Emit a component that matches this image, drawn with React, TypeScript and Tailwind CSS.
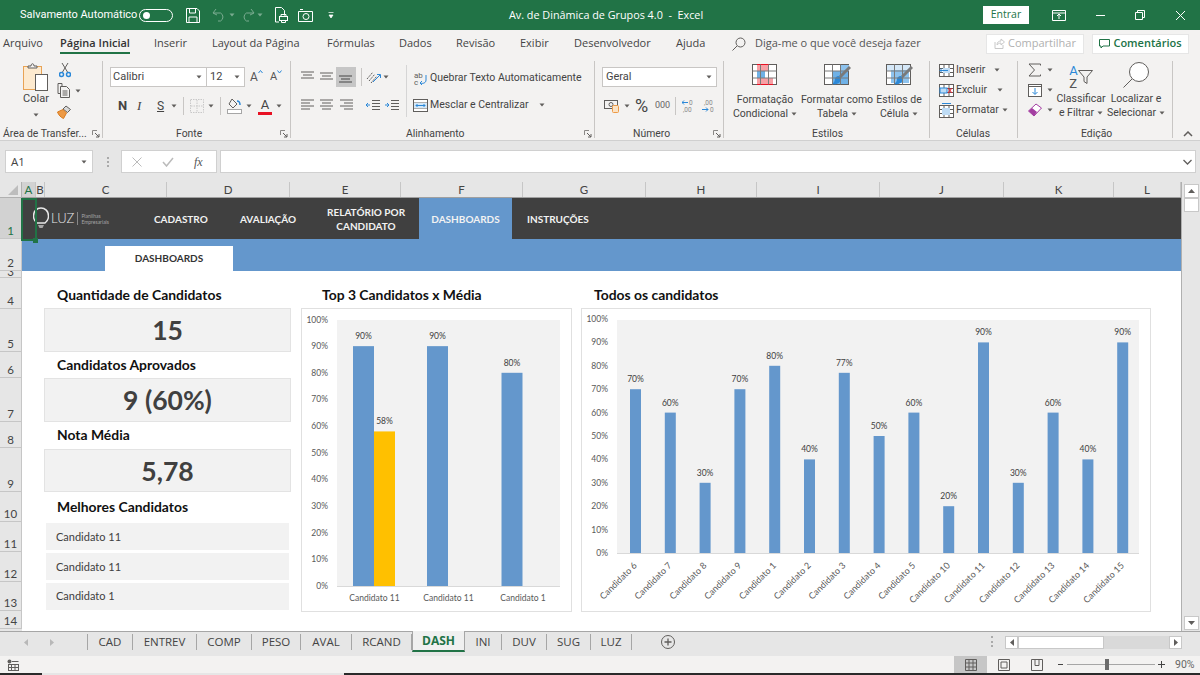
import React from "react";

const G = "#605e5c";
const B = "#2b88d8";

function Svg({ w, h, children, className = "" }: { w: number; h: number; children?: React.ReactNode; className?: string }) {
  return (
    <svg width={w} height={h} viewBox={`0 0 ${w} ${h}`} fill="none" className={"shrink-0 " + className}>
      {children}
    </svg>
  );
}

function Caret({ className = "" }: { className?: string }) {
  return (
    <Svg w={6} h={4} className={className}>
      <path d="M0.5 .5h5L3 3.5z" fill={G} />
    </Svg>
  );
}

function Lines({ rows, stroke = G }: { rows: [number, number, number][]; stroke?: string }) {
  return (
    <Svg w={14} h={14}>
      {rows.map(([a, b, y], i) => (
        <path key={i} d={`M${a} ${y}H${b}`} stroke={stroke} strokeWidth={1} />
      ))}
    </Svg>
  );
}

function Launcher({ className = "" }: { className?: string }) {
  return (
    <Svg w={8} h={8} className={className}>
      <path d="M.5 5V.5H5" stroke="#8a8886" />
      <path d="M3 3l4 4M7 4v3H4" stroke={G} />
    </Svg>
  );
}

function Group({ w, label, labelClass, launcher, children }: { w: string; label: string; labelClass: string; launcher?: boolean; children: React.ReactNode }) {
  return (
    <div className={"flex h-[77px] shrink-0 flex-col border-r border-[#c8c6c4] " + w}>
      <div className="flex h-[66px] min-w-0">{children}</div>
      <div className="flex h-[11px] items-center pt-[2px]">
        <span className={"text-[10.4px] leading-[14px] whitespace-nowrap text-[#444] " + labelClass}>{label}</span>
        {launcher && <Launcher className="mr-[2px] ml-auto" />}
      </div>
    </div>
  );
}

function TitleBar() {
  return (
    <div className="flex h-[30px] shrink-0 items-center bg-[#217346] text-white">
      <span className="ml-[20px] w-[119px] font-['Roboto',sans-serif] text-[11px] whitespace-nowrap">Salvamento Automático</span>
      <div className="flex h-[13px] w-[34px] items-center rounded-full border border-white pl-[3px]">
        <div className="h-[7px] w-[7px] rounded-full bg-white" />
      </div>
      <Svg w={14} h={15} className="ml-[13px]">
        <path d="M.5.5h10.5l2.500 2.500v11.500H.5z M3.500.5v4.500h6V.5 M3 14.500V9h8v5.500" stroke="#fff" />
      </Svg>
      <Svg w={15} h={14} className="ml-[12px] opacity-40">
        <path d="M4 1L1 5l4 2M1.500 5h7a4.500 4.500 0 0 1 0 8H6" stroke="#fff" />
      </Svg>
      <Caret className="ml-[2px] opacity-40 brightness-[3]" />
      <Svg w={15} h={14} className="ml-[5px] opacity-40">
        <path d="M11 1l3 4-4 2M13.500 5h-7a4.500 4.500 0 0 0 0 8H9" stroke="#fff" />
      </Svg>
      <Caret className="ml-[2px] opacity-40 brightness-[3]" />
      <Svg w={14} h={16} className="ml-[11px]">
        <path d="M1.500.500h6l3 3v5M1.500.500V15H5" stroke="#fff" />
        <rect x="5.500" y="9.500" width="8" height="4" stroke="#fff" />
        <path d="M7 9.500v-2h5v2M7.500 13.500v2h4v-2" stroke="#fff" />
      </Svg>
      <Svg w={15} h={13} className="ml-[10px]">
        <path d="M.5 2.500h14v10H.5z" stroke="#fff" />
        <circle cx="8" cy="7.500" r="3" stroke="#fff" />
        <path d="M2 .5h3" stroke="#fff" />
      </Svg>
      <Svg w={6} h={7} className="ml-[15px]">
        <path d="M.5.5h5M1 3h4L3 6z" stroke="#fff" fill="#fff" strokeWidth=".7" />
      </Svg>
      <span className="ml-[175px] w-[200px] text-[10.8px] whitespace-nowrap">Av. de Dinâmica de Grupos 4.0&nbsp; -&nbsp; Excel</span>
      <div className="ml-[274px] flex h-[18px] w-[46px] items-center justify-center bg-white text-[10.5px] text-[#217346]">Entrar</div>
      <Svg w={14} h={11} className="ml-[23px]">
        <path d="M.5.5h13v10H.5zM.5 3h13" stroke="#fff" />
        <path d="M7 9V4M5 6l2-2 2 2" stroke="#fff" />
      </Svg>
      <div className="ml-[30px] h-px w-[9px] bg-white" />
      <Svg w={10} h={10} className="ml-[30px]">
        <path d="M.5 2.500h7v7h-7zM2.500 2.500v-2h7v7h-2" stroke="#fff" />
      </Svg>
      <Svg w={11} h={11} className="ml-[30px]">
        <path d="M1 1l9 9M10 1l-9 9" stroke="#fff" />
      </Svg>
    </div>
  );
}

function TabsRow() {
  const t = "whitespace-nowrap text-[11px] text-[#444]";
  return (
    <div className="flex h-[25px] shrink-0 items-center bg-[#f3f2f1] pt-[2px]">
      <span className={t + " ml-[3px] w-[57px]"}>Arquivo</span>
      <div className="relative w-[94px] text-[11px]">
        <span className="font-semibold whitespace-nowrap text-[#333]">Página Inicial</span>
        <div className="absolute top-[17px] left-0 h-[2px] w-[70px] bg-[#217346]" />
      </div>
      <span className={t + " w-[58px]"}>Inserir</span>
      <span className={t + " w-[115px]"}>Layout da Página</span>
      <span className={t + " w-[72px]"}>Fórmulas</span>
      <span className={t + " w-[57px]"}>Dados</span>
      <span className={t + " w-[64px]"}>Revisão</span>
      <span className={t + " w-[54px]"}>Exibir</span>
      <span className={t + " w-[102px]"}>Desenvolvedor</span>
      <span className={t + " w-[56px]"}>Ajuda</span>
      <Svg w={14} h={14} className="mr-[9px]">
        <circle cx="8.500" cy="5.500" r="4.500" stroke={G} />
        <path d="M5 9l-4.500 4.500" stroke={G} />
      </Svg>
      <span className={t + " w-[231px] text-[#555]"}>Diga-me o que você deseja fazer</span>
      <div className="flex h-[20px] w-[98px] items-center justify-center gap-[3px] border border-[#e6e6e6] bg-white text-[11px] text-[#b0b0b0]">
        <Svg w={11} h={11}>
          <path d="M1 4v6.500h8V7M3 7c0-3 2-4 4-4V1l3.500 3L7 7V5C5 5 4 6 3 7z" stroke="#c8c8c8" />
        </Svg>
        Compartilhar
      </div>
      <div className="ml-[8px] flex h-[20px] w-[97px] items-center justify-center gap-[3px] border border-[#e6e6e6] bg-white text-[11px] font-semibold text-[#217346]">
        <Svg w={11} h={11}>
          <path d="M.5 1.500h10v6.500H4l-2 2V8H.5z" stroke="#217346" />
        </Svg>
        Comentários
      </div>
    </div>
  );
}

function ClipboardGroup() {
  return (
    <Group w="w-[103px]" label="Área de Transfer..." labelClass="ml-[3px]" launcher>
      <div className="ml-[22px] flex w-[28px] flex-col items-center pt-[2px]">
        <Svg w={26} h={28}>
          <rect x=".5" y="3.500" width="18" height="23" fill="#fdeacf" stroke="#e8a355" />
          <path d="M5 5V3h3c0-3 3-3 3 0h3v2z" fill="#f3f2f1" stroke={G} />
          <rect x="12.500" y="11.500" width="12" height="16" fill="#fff" stroke={G} />
        </Svg>
        <span className="mt-[1px] text-[11px] leading-[14px] text-[#444]">Colar</span>
        <Caret className="mt-[7px]" />
      </div>
      <div className="ml-[7px] flex w-[24px] flex-col pt-[2px]">
        <Svg w={12} h={15} className="ml-[2px]">
          <path d="M3 0l5.500 9M9 0L3.500 9" stroke={G} />
          <circle cx="2.500" cy="11.500" r="2" stroke={B} strokeWidth="1.500" />
          <circle cx="9.500" cy="11.500" r="2" stroke={B} strokeWidth="1.500" />
        </Svg>
        <div className="mt-[5px] flex items-center">
          <Svg w={15} h={15}>
            <path d="M5 3V.5H1v10h2" stroke={G} />
            <path d="M3.500 3.500h6l3 3v8h-9z M5.500 8h5M5.500 10h5M5.500 12h5" stroke={G} />
          </Svg>
          <Caret className="ml-[3px]" />
        </div>
        <Svg w={15} h={15} className="mt-[6px]">
          <path d="M9 2l4.500 3.500-3 3L6 5z" fill="#d9d9d9" stroke={G} />
          <path d="M6 5.500L.5 8c1 3 3.500 5.500 6 6.500l3-5.500z" fill="#ed9a46" stroke="#d97c20" />
        </Svg>
      </div>
    </Group>
  );
}

function FontGroup() {
  return (
    <Group w="w-[188px]" label="Fonte" labelClass="ml-[73px]" launcher>
      <div className="flex flex-col pt-[6px] pl-[7px]">
        <div className="flex h-[20px] items-center">
          <div className="flex h-[20px] w-[97px] items-center justify-between border border-[#c8c6c4] bg-white pr-[4px] pl-[2px] text-[11px] text-[#444]">
            Calibri <Caret />
          </div>
          <div className="flex h-[20px] w-[38px] items-center justify-between border border-l-0 border-[#c8c6c4] bg-white pr-[4px] pl-[3px] text-[11px] text-[#444]">
            12 <Caret />
          </div>
          <div className="ml-[5px] flex w-[14px] items-start text-[#555]">
            <span className="text-[12px] leading-[14px]">A</span>
            <Svg w={5} h={4}><path d="M.5 3L2.500.5 4.500 3" stroke={B} /></Svg>
          </div>
          <div className="ml-[6px] flex w-[14px] items-start text-[#555]">
            <span className="text-[11px] leading-[14px]">A</span>
            <Svg w={5} h={4}><path d="M.5 .5L2.500 3 4.500 .5" stroke={B} /></Svg>
          </div>
        </div>
        <div className="mt-[10px] flex h-[18px] items-center">
          <span className="ml-[8px] w-[19px] text-[13px] font-bold text-[#444]">N</span>
          <span className="w-[20px] font-['Liberation_Serif',serif] text-[13px] text-[#444] italic">I</span>
          <span className="w-[14px] text-[12px] text-[#444] underline">S</span>
          <Caret />
          <div className="ml-[6px] h-[18px] w-px bg-[#c8c6c4]" />
          <Svg w={14} h={14} className="ml-[6px]">
            <rect x=".5" y=".5" width="13" height="13" stroke="#c8c8c8" strokeDasharray="1.500 1" />
            <path d="M7 1v12M1 7h12" stroke="#c8c8c8" strokeDasharray="1.500 1" />
          </Svg>
          <Caret className="ml-[4px]" />
          <div className="ml-[6px] h-[18px] w-px bg-[#c8c6c4]" />
          <Svg w={15} h={16} className="ml-[6px]">
            <path d="M5 1l5 5-4 4-4-4z" stroke={G} />
            <path d="M10 3c2 0 3 1 3 4" stroke={B} strokeWidth="1.500" />
            <rect x=".5" y="11.500" width="14" height="4" fill="#fff" stroke="#a6a6a6" />
          </Svg>
          <Caret className="ml-[4px]" />
          <div className="ml-[6px] flex w-[14px] flex-col items-center">
            <span className="h-[12px] text-[13px] leading-[13px] text-[#444]">A</span>
            <div className="mt-[2px] h-[3px] w-[14px] bg-[#e81123]" />
          </div>
          <Caret className="ml-[4px]" />
        </div>
      </div>
    </Group>
  );
}

function AlignGroup() {
  const top: [number, number, number][] = [[0, 13, 2], [2, 11, 5], [0, 13, 8]];
  const mid: [number, number, number][] = [[0, 13, 3], [2, 11, 6], [0, 13, 9]];
  const bot: [number, number, number][] = [[0, 13, 6], [2, 11, 9], [0, 13, 12]];
  const left: [number, number, number][] = [[0, 13, 2], [0, 9, 5], [0, 13, 8], [0, 9, 11]];
  const ctr: [number, number, number][] = [[0, 13, 2], [2, 11, 5], [0, 13, 8], [2, 11, 11]];
  const right: [number, number, number][] = [[0, 13, 2], [4, 13, 5], [0, 13, 8], [4, 13, 11]];
  return (
    <Group w="w-[304px]" label="Alinhamento" labelClass="ml-[115px]" launcher>
      <div className="flex w-[105px] shrink-0 flex-col pt-[6px] pl-[10px]">
        <div className="flex h-[20px] items-center">
          <Lines rows={top} />
          <div className="ml-[5px]"><Lines rows={mid} /></div>
          <div className="ml-[2px] flex h-[20px] w-[20px] items-center justify-center bg-[#c6c6c6]"><Lines rows={bot} stroke="#444" /></div>
          <div className="ml-[5px] h-[18px] w-px bg-[#c8c6c4]" />
          <Svg w={15} h={15} className="ml-[4px]">
            <path d="M1 9l6-7M3 11l6-7M5 13l6-7" stroke={G} strokeDasharray="2 1" />
            <path d="M7 12l7-7M11 4.500h3.500V8" stroke={B} />
          </Svg>
          <Caret className="ml-[2px]" />
        </div>
        <div className="mt-[9px] flex h-[18px] items-center">
          <Lines rows={left} />
          <div className="ml-[5px]"><Lines rows={ctr} /></div>
          <div className="ml-[6px]"><Lines rows={right} /></div>
          <div className="ml-[6px] h-[18px] w-px bg-[#c8c6c4]" />
          <Svg w={14} h={12} className="ml-[6px]">
            <path d="M6 1.500h8M6 4.500h8M6 7.500h8M6 10.500h8" stroke={G} />
            <path d="M4 6H0M2 4L0 6l2 2" stroke={B} />
          </Svg>
          <Svg w={14} h={12} className="ml-[5px]">
            <path d="M6 1.500h8M6 4.500h8M6 7.500h8M6 10.500h8" stroke={G} />
            <path d="M0 6h4M2 4l2 2-2 2" stroke={B} />
          </Svg>
        </div>
      </div>
      <div className="mt-[4px] ml-[10px] h-[52px] w-px bg-[#d5d5d5]" />
      <div className="ml-[6px] flex flex-col pt-[7px]">
        <div className="flex h-[20px] items-center text-[10.5px] whitespace-nowrap text-[#444]">
          <Svg w={15} h={15}>
            <text x="1" y="7" fontSize="8" fill={G}>ab</text>
            <text x="1" y="14" fontSize="8" fill={G}>c</text>
            <path d="M13 4v5c0 3-3 4-6 3M9 10l-2 2 2 2" stroke={B} />
          </Svg>
          <span className="ml-[2px]">Quebrar Texto Automaticamente</span>
        </div>
        <div className="mt-[8px] flex h-[18px] items-center text-[10.5px] whitespace-nowrap text-[#444]">
          <Svg w={15} h={13}>
            <rect x=".5" y=".5" width="14" height="12" fill="#fff" stroke={G} />
            <path d="M.5 4h14M.5 9h14" stroke={G} />
            <rect x="1" y="4" width="13" height="5" fill="#d5e8f8" />
            <path d="M3 6.500h9M4.500 5L3 6.500 4.500 8M10.500 5L12 6.500 10.500 8" stroke={B} />
          </Svg>
          <span className="ml-[2px]">Mesclar e Centralizar</span>
          <Caret className="ml-[10px]" />
        </div>
      </div>
    </Group>
  );
}

function NumberGroup() {
  return (
    <Group w="w-[129px]" label="Número" labelClass="ml-[38px]" launcher>
      <div className="flex flex-col pt-[6px] pl-[7px]">
        <div className="flex h-[20px] w-[115px] items-center justify-between border border-[#c8c6c4] bg-white pr-[4px] pl-[3px] text-[11px] text-[#444]">
          Geral <Caret />
        </div>
        <div className="mt-[10px] flex h-[18px] items-center">
          <Svg w={16} h={14} className="ml-[2px]">
            <rect x=".5" y="1.500" width="13" height="8" stroke={G} />
            <circle cx="7" cy="5.500" r="2" stroke={G} />
            <rect x="8.500" y="6.500" width="6" height="7" rx="1" fill="#fbe3c5" stroke="#ed9a46" />
          </Svg>
          <Caret className="ml-[4px]" />
          <span className="ml-[5px] w-[20px] text-[18px] leading-[18px] text-[#444]">%</span>
          <span className="w-[20px] text-[9px] text-[#666]">000</span>
          <div className="h-[18px] w-px bg-[#c8c6c4]" />
          <Svg w={15} h={14} className="ml-[6px]">
            <path d="M6 3.500H0M2 1.500l-2 2 2 2" stroke={B} />
            <text x="7" y="6" fontSize="6.500" fill="#888">0</text>
            <text x="1" y="13" fontSize="6.500" fill="#888">,00</text>
          </Svg>
          <Svg w={15} h={14} className="ml-[4px]">
            <text x="3" y="6" fontSize="6.500" fill="#888">,00</text>
            <path d="M1 10.500h6M5 8.500l2 2-2 2" stroke={B} />
            <text x="9" y="13" fontSize="6.500" fill="#888">0</text>
          </Svg>
        </div>
      </div>
    </Group>
  );
}

function StyleBtn({ w, className, lines, icon }: { w: string; className: string; lines: [string, string]; icon: React.ReactNode }) {
  return (
    <div className={"flex flex-col items-center pt-[3px] " + w + " " + className}>
      <div className="h-[22px]">{icon}</div>
      <span className="mt-[7px] text-[10.5px] leading-[14px] whitespace-nowrap text-[#444]">{lines[0]}</span>
      <span className="flex items-center gap-[3px] text-[10.5px] leading-[14px] whitespace-nowrap text-[#444]">{lines[1]}<Caret /></span>
    </div>
  );
}

function GridIcon({ children }: { children?: React.ReactNode }) {
  return (
    <Svg w={27} h={22}>
      <rect x=".5" y=".5" width="24" height="20" fill="#fff" stroke={G} />
      {children}
      <path d="M8.500.5v20M16.500.5v20M.5 7h24M.5 14h24" stroke="#7a7a7a" />
    </Svg>
  );
}

const Brush = () => (
  <>
    <path d="M26 3L16 13" stroke="#7a7a7a" strokeWidth="3" />
    <path d="M15 12c-3 0-4 2-4 3 0 3-2 4-3 5 5 1 9-1 9-6z" fill={B} />
  </>
);

function StylesGroup() {
  return (
    <Group w="w-[206px]" label="Estilos" labelClass="ml-[88px]">
      <StyleBtn w="w-[82px]" className="ml-0" lines={["Formatação", "Condicional"]} icon={
        <GridIcon>
          <rect x="5" y="1" width="12" height="6" fill="#f7a0a5" />
          <rect x="5" y="7" width="8" height="7" fill="#6fb1e6" />
          <rect x="5" y="14" width="16" height="6" fill="#f7a0a5" />
          <path d="M5 .5h12M5 20.500h16" stroke="#e81123" />
        </GridIcon>
      } />
      <StyleBtn w="w-[72px]" className="ml-[-5px]" lines={["Formatar como", "Tabela"]} icon={
        <GridIcon>
          <rect x="9" y="7" width="15" height="13" fill="#6fb1e6" />
          <rect x="17" y="1" width="8" height="6" fill="#8ec3ee" />
          <Brush />
        </GridIcon>
      } />
      <StyleBtn w="w-[52px]" className="ml-0" lines={["Estilos de", "Célula"]} icon={
        <GridIcon>
          <rect x="1" y="1" width="23" height="6" fill="#d5e8f8" />
          <rect x="5" y="6" width="18" height="13" fill="#8ec3ee" />
          <Brush />
        </GridIcon>
      } />
    </Group>
  );
}

function CellsGroup() {
  const r = "flex h-[20px] items-center text-[10.5px] whitespace-nowrap text-[#444]";
  const cell = (
    <>
      <rect x=".5" y=".5" width="14" height="12" fill="#fff" stroke={G} />
      <path d="M5 .5v12M10 .5v12M.5 4.500h14M.5 8.500h14" stroke={G} />
    </>
  );
  return (
    <Group w="w-[88px]" label="Células" labelClass="ml-[26px]">
      <div className="-mt-px flex flex-col pl-[9px]">
        <div className={r}>
          <Svg w={15} h={13}>{cell}<rect x="4" y="4" width="7" height="5" fill="#bfdcf5" /><path d="M9 6.500H1M3 4.500l-2 2 2 2" stroke={B} /></Svg>
          <span className="ml-[2px] w-[38px]">Inserir</span>
          <Caret />
        </div>
        <div className={r}>
          <Svg w={15} h={13}>{cell}<rect x="1" y="4" width="7" height="5" fill="#bfdcf5" stroke={B} /><path d="M9 4l4 5M13 4l-4 5" stroke="#e81123" /></Svg>
          <span className="ml-[2px] w-[41px]">Excluir</span>
          <Caret />
        </div>
        <div className={r}>
          <Svg w={15} h={15}>
            <g transform="translate(0 2)">{cell}<rect x="3" y="3" width="8" height="7" fill="#bfdcf5" /></g>
            <path d="M3 .5h9" stroke={B} />
          </Svg>
          <span className="ml-[2px] w-[46px]">Formatar</span>
          <Caret />
        </div>
      </div>
    </Group>
  );
}

function EditGroup() {
  return (
    <Group w="w-[155px]" label="Edição" labelClass="ml-[63px]">
      <div className="-mt-px box-content flex w-[25px] shrink-0 flex-col pl-[10px]">
        <div className="flex h-[20px] items-center">
          <Svg w={13} h={14} className="mr-[2px]">
            <path d="M12.500 2.500V1H1l5.500 6L1 13h11.500v-1.500" stroke={G} />
          </Svg>
          <Caret className="ml-[4px]" />
        </div>
        <div className="flex h-[20px] items-center">
          <Svg w={14} h={13}>
            <rect x=".5" y=".5" width="13" height="12" fill="#fff" stroke={G} />
            <path d="M.5 2.500h13" stroke={G} />
            <path d="M7 4v6M4.500 8L7 10.500 9.500 8" stroke={B} />
          </Svg>
          <Caret className="ml-[5px]" />
        </div>
        <div className="flex h-[20px] items-center">
          <Svg w={14} h={14}>
            <path d="M.5 8L8 1l5.500 4L6 13z" fill="#fff" stroke="#a33ea1" />
            <path d="M.5 8L4 5l5 4-3 4z" fill="#a33ea1" />
          </Svg>
          <Caret className="ml-[5px]" />
        </div>
      </div>
      <div className="ml-[-7px] flex w-[70px] shrink-0 flex-col items-center pt-[2px]">
        <div className="flex h-[27px] items-end">
          <div className="flex flex-col text-[13px] leading-[13px] text-[#555]">
            <span className="text-[#2b88d8]">A</span>
            <span>Z</span>
          </div>
          <Svg w={15} h={14} className="mb-[6px]">
            <path d="M.5.5h14L9 7v6.500l-3-2V7z" stroke={G} />
          </Svg>
        </div>
        <span className="mt-[2px] text-[10.5px] leading-[14px] whitespace-nowrap text-[#444]">Classificar</span>
        <span className="flex items-center gap-[3px] text-[10.5px] leading-[14px] whitespace-nowrap text-[#444]">e Filtrar<Caret /></span>
      </div>
      <div className="ml-[-8px] flex w-[56px] shrink-0 flex-col items-center pt-[1px]">
        <Svg w={26} h={27}>
          <circle cx="16" cy="10" r="9.500" fill="#fff" stroke={G} />
          <path d="M9 17L.5 25.500" stroke={G} />
        </Svg>
        <span className="mt-[3px] text-[10.5px] leading-[14px] whitespace-nowrap text-[#444]">Localizar e</span>
        <span className="flex items-center gap-[3px] text-[10.5px] leading-[14px] whitespace-nowrap text-[#444]">Selecionar<Caret /></span>
      </div>
    </Group>
  );
}

function Ribbon() {
  return (
    <div className="flex h-[86px] shrink-0 border-b border-[#d0d0d0] bg-[#f3f2f1] pt-[6px] font-['Roboto',sans-serif]">
      <ClipboardGroup />
      <FontGroup />
      <AlignGroup />
      <NumberGroup />
      <StylesGroup />
      <CellsGroup />
      <EditGroup />
      <Svg w={10} h={6} className="mt-[70px] ml-[10px]">
        <path d="M1 5l4-4 4 4" stroke={G} strokeWidth="1.500" />
      </Svg>
    </div>
  );
}

function FormulaBar() {
  return (
    <div className="flex h-[41px] shrink-0 items-start bg-[#e6e6e6] pt-[9px]">
      <div className="ml-[5px] flex h-[23px] w-[88px] items-center justify-between border border-[#d0d0d0] bg-white pr-[5px] pl-[5px] text-[11.500px] text-[#444]">
        A1 <Caret />
      </div>
      <div className="ml-[13px] flex h-[23px] w-[3px] flex-col items-center justify-center gap-[2px]">
        <div className="h-[2px] w-[2px] bg-[#aaa]" />
        <div className="h-[2px] w-[2px] bg-[#aaa]" />
        <div className="h-[2px] w-[2px] bg-[#aaa]" />
      </div>
      <div className="ml-[12px] flex h-[23px] w-[96px] items-center border border-[#d0d0d0] bg-white">
        <Svg w={10} h={10} className="ml-[10px]"><path d="M.5.5l9 9M9.500.5l-9 9" stroke="#bbb" /></Svg>
        <Svg w={12} h={10} className="ml-[20px]"><path d="M1 5l3.500 4L11 1" stroke="#bbb" strokeWidth="1.500" /></Svg>
        <span className="ml-[20px] font-['Liberation_Serif',serif] text-[12px] text-[#555] italic">fx</span>
      </div>
      <div className="ml-[3px] flex h-[23px] w-[976px] items-center justify-end border border-[#d0d0d0] bg-white pr-[3px]">
        <Svg w={9} h={6}><path d="M.5 1l4 4 4-4" stroke={G} strokeWidth="1.300" /></Svg>
      </div>
    </div>
  );
}

const cols: [string, string][] = [
  ["A", "w-[14px]"], ["B", "w-[9px]"], ["C", "w-[122px]"], ["D", "w-[123px]"], ["E", "w-[111px]"], ["F", "w-[122px]"],
  ["G", "w-[123px]"], ["H", "w-[111px]"], ["I", "w-[123px]"], ["J", "w-[124px]"], ["K", "w-[110px]"], ["L", "w-[67px]"],
];

const rowsH: [string, string][] = [
  ["1", "h-[41px]"], ["2", "h-[32px]"], ["3", "h-[7px]"], ["4", "h-[31px]"], ["5", "h-[43px]"], ["6", "h-[26px]"], ["7", "h-[44px]"],
  ["8", "h-[26px]"], ["9", "h-[44px]"], ["10", "h-[30px]"], ["11", "h-[30px]"], ["12", "h-[30px]"], ["13", "h-[29px]"], ["14", "h-[18px]"],
];

function ColHeaders() {
  return (
    <div className="flex h-[16px] shrink-0 border-b border-[#a0a0a0] bg-[#e6e6e6] font-['Lato',sans-serif] text-[11.5px] text-[#444]">
      {cols.map(([c, w]) => (
        <div key={c} className={"flex items-center justify-center border-r border-[#c6c6c6] leading-none " + w + (c === "A" ? " bg-[#d2d2d2] text-[#217346]" : "")}>
          {c}
        </div>
      ))}
    </div>
  );
}

function RowHeaders() {
  return (
    <div className="flex w-[22px] shrink-0 flex-col">
      <div className="flex h-[16px] justify-end border-r border-b border-[#b0b0b0] bg-[#e6e6e6] pt-[3px] pr-[3px]">
        <Svg w={10} h={10}><path d="M10 0v10H0z" fill="#bdbdbd" /></Svg>
      </div>
      {rowsH.map(([r, h]) => (
        <div key={r} className={"flex justify-center overflow-hidden border-r border-b border-[#c6c6c6] font-['Lato',sans-serif] text-[11.5px] " + h + (r === "3" ? " items-start leading-[2px]" : " items-end leading-[15px]") + (r === "1" ? " border-r-[#217346] bg-[#d2d2d2] text-[#217346]" : " bg-[#e6e6e6] text-[#444]")}>
          {r}
        </div>
      ))}
    </div>
  );
}

function Logo() {
  return (
    <div className="ml-[11px] flex w-[88px] items-center">
      <Svg w={16} h={23}>
        <path d="M4 16c-2-1.500-3.500-3.500-3.500-7C.5 4 4 1 8 1s7.500 3 7.500 8c0 3.500-1.500 5.500-3.500 7z" stroke="#e8e8e8" strokeWidth="1.500" />
        <path d="M5 18h6l-1.500 3h-3z" fill="#a6a6a6" />
      </Svg>
      <span className="ml-[2px] text-[13px] font-light text-[#e8e8e8]">LUZ</span>
      <div className="ml-[3px] h-[13px] w-px bg-[#888]" />
      <div className="ml-[3px] flex flex-col text-[5px] leading-[6px] text-[#a6a6a6]">
        <span>Planilhas</span>
        <span>Empresariais</span>
      </div>
    </div>
  );
}

function NavBar() {
  const n = "text-[10px] font-bold whitespace-nowrap text-[#f2f2f2]";
  return (
    <div className="flex h-[41px] shrink-0 items-center bg-[#404040] font-['Lato',sans-serif]">
      <Logo />
      <span className={n + " ml-[33px] w-[86px] pt-[2px]"}>CADASTRO</span>
      <span className={n + " w-[87px] pt-[2px]"}>AVALIAÇÃO</span>
      <span className={n + " w-[78px] pt-[1px] text-center leading-[14px]"}>RELATÓRIO POR<br />CANDIDATO</span>
      <div className={n + " ml-[14px] flex h-[41px] w-[93px] items-center justify-center bg-[#6497cc] pt-[2px]"}>DASHBOARDS</div>
      <span className={n + " ml-[15px] pt-[2px]"}>INSTRUÇÕES</span>
    </div>
  );
}

function StatBox({ value, className }: { value: string; className: string }) {
  return (
    <div className={"flex items-center justify-center border border-[#e3e3e3] bg-[#f2f2f2] pt-[2px] text-[26.5px] font-bold text-[#404040] " + className}>
      {value}
    </div>
  );
}

function Heading({ children, className = "" }: { children: React.ReactNode; className?: string }) {
  return <div className={"flex items-center text-[13.9px] font-bold whitespace-nowrap text-[#111] " + className}>{children}</div>;
}

function LeftColumn() {
  const row = "mx-[2px] flex h-[27px] items-center bg-[#f2f2f2] pl-[10px] text-[11px] text-[#404040]";
  return (
    <div className="w-[247px] shrink-0">
      <Heading className="h-[37px] pt-[12px] pl-[13px]">Quantidade de Candidatos</Heading>
      <StatBox value="15" className="h-[44px]" />
      <Heading className="h-[26px] pl-[13px]">Candidatos Aprovados</Heading>
      <StatBox value="9 (60%)" className="h-[44px]" />
      <Heading className="h-[27px] pl-[13px]">Nota Média</Heading>
      <StatBox value="5,78" className="h-[43px]" />
      <Heading className="h-[31px] pl-[13px]">Melhores Candidatos</Heading>
      <div className={row + " pt-[1px]"}>Candidato 11</div>
      <div className={row + " mt-[3px] pt-[1px]"}>Candidato 11</div>
      <div className={row + " mt-[3px]"}>Candidato 1</div>
    </div>
  );
}

const pct = [100, 90, 80, 70, 60, 50, 40, 30, 20, 10, 0];
const AXIS = "#595959";
const BLUE = "#6497cc";

function Chart1() {
  const y = (v: number) => 586 - (v / 100) * 266.5;
  const bars: [number, number, string][] = [
    [353, 90, BLUE], [374, 58, "#ffc000"], [427, 90, BLUE], [501.5, 80, BLUE],
  ];
  const names: [number, string][] = [[374.5, "Candidato 11"], [448.5, "Candidato 11"], [523, "Candidato 1"]];
  return (
    <svg width={269} height={302} viewBox="302 309 269 302" className="font-['Lato',sans-serif]">
      <rect x="337" y="320" width="223" height="266" fill="#f2f2f2" />
      <path d="M337 586.500h223" stroke="#d9d9d9" />
      {pct.map((p) => (
        <text key={p} x="328" y={y(p) + 3} textAnchor="end" fontSize="8.500" fill={AXIS}>{p}%</text>
      ))}
      {bars.map(([x, v, c], i) => (
        <g key={i}>
          <rect x={x} y={y(v)} width="21" height={586 - y(v)} fill={c} />
          <text x={x + 10.5} y={y(v) - 7} textAnchor="middle" fontSize="8.500" fill="#404040">{v}%</text>
        </g>
      ))}
      {names.map(([x, n], i) => (
        <text key={i} x={x} y="601" textAnchor="middle" fontSize="8.500" fill={AXIS}>{n}</text>
      ))}
    </svg>
  );
}

function Chart2() {
  const data: [string, number][] = [
    ["Candidato 6", 70], ["Candidato 7", 60], ["Candidato 8", 30], ["Candidato 9", 70], ["Candidato 1", 80],
    ["Candidato 2", 40], ["Candidato 3", 77], ["Candidato 4", 50], ["Candidato 5", 60], ["Candidato 10", 20],
    ["Candidato 11", 90], ["Candidato 12", 30], ["Candidato 13", 60], ["Candidato 14", 40], ["Candidato 15", 90],
  ];
  const y = (v: number) => 553 - (v / 100) * 234;
  return (
    <svg width={568} height={302} viewBox="582 309 568 302" className="font-['Lato',sans-serif]">
      <rect x="617" y="320" width="522" height="233" fill="#f2f2f2" />
      <path d="M617 553.500h522" stroke="#d9d9d9" />
      {pct.map((p) => (
        <text key={p} x="608" y={y(p) + 3} textAnchor="end" fontSize="8.500" fill={AXIS}>{p}%</text>
      ))}
      {data.map(([n, v], i) => {
        const cx = 635.5 + i * 34.8;
        return (
          <g key={i}>
            <rect x={cx - 5.5} y={y(v)} width="11" height={553 - y(v)} fill={BLUE} />
            <text x={cx} y={y(v) - 7} textAnchor="middle" fontSize="8.500" fill="#404040">{v}%</text>
            <text x={cx + 2} y="566" textAnchor="end" fontSize="9" fill={AXIS} transform={`rotate(-45 ${cx + 2} 566)`}>{n}</text>
          </g>
        );
      })}
    </svg>
  );
}

function Dashboard() {
  return (
    <div className="flex min-h-0 flex-1 bg-white pl-[22px] font-['Lato',sans-serif]">
      <LeftColumn />
      <div className="ml-[10px] w-[271px] shrink-0">
        <Heading className="h-[37px] pt-[12px] pl-[21px]">Top 3 Candidatos x Média</Heading>
        <div className="h-[304px] border border-[#e0e0e0]"><Chart1 /></div>
      </div>
      <div className="ml-[9px] w-[570px] shrink-0">
        <Heading className="h-[37px] pt-[12px] pl-[13px]">Todos os candidatos</Heading>
        <div className="h-[304px] border border-[#e0e0e0]"><Chart2 /></div>
      </div>
    </div>
  );
}

function Sheet() {
  return (
    <div className="relative flex w-[1159px] shrink-0 flex-col bg-white">
      <ColHeaders />
      <NavBar />
      <div className="flex h-[32px] shrink-0 items-end bg-[#6497cc] pl-[83px]">
        <div className="flex h-[25px] w-[128px] items-center justify-center bg-white font-['Lato',sans-serif] text-[10px] font-bold text-[#333]">DASHBOARDS</div>
      </div>
      <Dashboard />
      <div className="absolute top-[16px] left-[-1px] h-[43px] w-[16px] border-2 border-[#217346]" />
      <div className="absolute top-[56px] left-[11px] h-[5px] w-[5px] bg-[#217346]" />
    </div>
  );
}

function VScroll() {
  const btn = "mx-auto flex h-[14px] w-[15px] items-center justify-center border border-[#c8c8c8] bg-white";
  return (
    <div className="flex w-[19px] shrink-0 flex-col border-l border-[#b0b0b0] bg-[#e6e6e6] pt-[2px] pb-[1px]">
      <div className={btn}><Svg w={7} h={4}><path d="M0 4h7L3.500 0z" fill={G} /></Svg></div>
      <div className="mx-auto h-[14px] w-[15px] border border-[#c8c8c8] bg-white" />
      <div className={btn + " mt-auto"}><Svg w={7} h={4}><path d="M0 0h7L3.500 4z" fill={G} /></Svg></div>
    </div>
  );
}

const sheets: [string, string][] = [
  ["CAD", "w-[45px]"], ["ENTREV", "w-[64px]"], ["COMP", "w-[55px]"], ["PESO", "w-[49px]"], ["AVAL", "w-[51px]"], ["RCAND", "w-[60px]"],
];
const sheets2: [string, string][] = [["INI", "w-[37px]"], ["DUV", "w-[45px]"], ["SUG", "w-[44px]"], ["LUZ", "w-[41px]"]];

function SheetTab({ name, w }: { name: string; w: string }) {
  return (
    <div className={"flex h-[16px] items-center justify-center border-r border-[#a6a6a6] text-[11.500px] text-[#444] " + w}>{name}</div>
  );
}

function TabBar() {
  return (
    <div className="flex h-[25px] shrink-0 items-start border-t border-[#a6a6a6] bg-[#e6e6e6] pt-[2px]">
      <div className="flex h-[16px] w-[88px] items-center border-r border-[#a6a6a6]">
        <Svg w={4} h={7} className="ml-[24px]"><path d="M4 0v7L0 3.500z" fill="#b8b8b8" /></Svg>
        <Svg w={4} h={7} className="ml-[22px]"><path d="M0 0v7l4-3.500z" fill="#b8b8b8" /></Svg>
      </div>
      {sheets.map(([n, w]) => <SheetTab key={n} name={n} w={w} />)}
      <div className="-mt-[3px] flex h-[21px] w-[53px] items-center justify-center border-x border-b-2 border-x-[#a6a6a6] border-b-[#217346] bg-[#f0f0f0] text-[12px] font-bold text-[#217346]">DASH</div>
      {sheets2.map(([n, w]) => <SheetTab key={n} name={n} w={w} />)}
      <Svg w={14} h={14} className="mt-px ml-[29px]">
        <circle cx="7" cy="7" r="6.500" stroke={G} />
        <path d="M7 3.500v7M3.500 7h7" stroke={G} strokeWidth="1.300" />
      </Svg>
      <div className="mt-[2px] ml-[315px] flex h-[11px] w-[3px] flex-col items-center justify-between">
        <div className="h-[2px] w-[2px] bg-[#aaa]" />
        <div className="h-[2px] w-[2px] bg-[#aaa]" />
        <div className="h-[2px] w-[2px] bg-[#aaa]" />
      </div>
      <div className="mt-[2px] ml-[12px] flex h-[13px] w-[177px] items-center bg-[#d9d9d9]">
        <div className="flex h-[13px] w-[13px] items-center justify-center border border-[#c8c8c8] bg-white"><Svg w={4} h={7}><path d="M4 0v7L0 3.500z" fill={G} /></Svg></div>
        <div className="h-[13px] w-[86px] border border-[#c8c8c8] bg-white" />
        <div className="ml-auto flex h-[13px] w-[13px] items-center justify-center border border-[#c8c8c8] bg-white"><Svg w={4} h={7}><path d="M0 0v7l4-3.500z" fill={G} /></Svg></div>
      </div>
    </div>
  );
}

function StatusBar() {
  return (
    <div className="flex h-[17px] shrink-0 items-center bg-[#f3f2f1]">
      <Svg w={12} h={12} className="ml-[7px]">
        <circle cx="2.500" cy="2.500" r="2" fill={G} />
        <rect x="1.500" y="5.500" width="10" height="6" stroke={G} />
        <path d="M5 2.500h6.500M4.500 5.500v6M8 5.500v6M1.500 8.500h10" stroke={G} />
      </Svg>
      <div className="ml-[935px] flex h-[17px] w-[33px] items-center justify-center bg-[#c6c6c6]">
        <Svg w={12} h={12}><path d="M.5.5h11v11H.5zM4 .5v11M8 .5v11M.5 4h11M.5 8h11" stroke={G} /></Svg>
      </div>
      <Svg w={12} h={12} className="ml-[11px]"><path d="M.5.5h11v11H.5z" stroke={G} /><path d="M3 3h6v6H3z" stroke={G} /></Svg>
      <Svg w={12} h={12} className="ml-[21px]"><path d="M.5.5h11v11H.5zM4 .5v6h4v-6" stroke={G} /></Svg>
      <div className="ml-[15px] h-px w-[5px] bg-[#444]" />
      <div className="ml-[4px] flex h-[11px] w-[88px] items-center">
        <div className="h-px w-[38px] bg-[#a6a6a6]" />
        <div className="h-[11px] w-[4px] bg-[#6b6b6b]" />
        <div className="h-px w-[46px] bg-[#a6a6a6]" />
      </div>
      <Svg w={7} h={7} className="ml-[3px]"><path d="M3.500 0v7M0 3.500h7" stroke="#444" /></Svg>
      <span className="ml-[10px] font-['Roboto',sans-serif] text-[10.5px] text-[#666]">90%</span>
    </div>
  );
}

export default function App() {
  return (
    <div className="flex h-[675px] w-[1200px] flex-col overflow-hidden bg-[#e6e6e6] font-['Open_Sans','Noto_Sans',sans-serif]">
      <TitleBar />
      <TabsRow />
      <Ribbon />
      <FormulaBar />
      <div className="flex h-[449px] shrink-0">
        <RowHeaders />
        <Sheet />
        <VScroll />
      </div>
      <TabBar />
      <StatusBar />
      <div className="flex h-[2px] shrink-0">
        <div className="w-[42px] bg-[#2a2a2a]" />
        <div className="w-[302px] bg-[#e6e6e6]" />
        <div className="flex-1 bg-[#2a2a2a]" />
      </div>
    </div>
  );
}
